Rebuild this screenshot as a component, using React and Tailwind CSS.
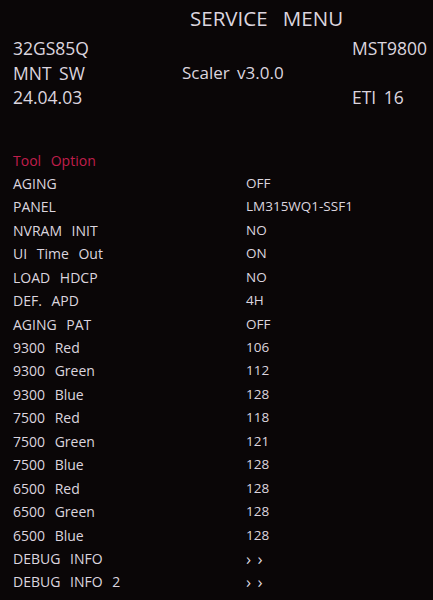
import React from "react";

const rows = [
  ["AGING", "OFF"],
  ["PANEL", "LM315WQ1-SSF1"],
  ["NVRAM INIT", "NO"],
  ["UI Time Out", "ON"],
  ["LOAD HDCP", "NO"],
  ["DEF. APD", "4H"],
  ["AGING PAT", "OFF"],
  ["9300 Red", "106"],
  ["9300 Green", "112"],
  ["9300 Blue", "128"],
  ["7500 Red", "118"],
  ["7500 Green", "121"],
  ["7500 Blue", "128"],
  ["6500 Red", "128"],
  ["6500 Green", "128"],
  ["6500 Blue", "128"],
  ["DEBUG INFO", "› ›"],
  ["DEBUG INFO 2", "› ›"],
];

export default function App() {
  return (
    <div
      className="w-[433px] h-[600px] overflow-hidden bg-[#0a0607] text-[#dcd5df] whitespace-pre"
      style={{ fontFamily: '"Open Sans", "Noto Sans", sans-serif' }}
    >
      {/* title */}
      <div className="pt-[5px] pl-[190px] text-[20.5px] leading-[26px] [word-spacing:10px]">
        SERVICE MENU
      </div>

      {/* model info */}
      <div className="mt-[5px] pl-[13px] text-[17.5px] leading-[24.5px] [word-spacing:3px]">
        <div className="flex">
          <span className="w-[339px]">32GS85Q</span>
          <span>MST9800</span>
        </div>
        <div className="flex">
          <span className="w-[169px]">MNT SW</span>
          <span className="text-[17px]">Scaler v3.0.0</span>
        </div>
        <div className="flex">
          <span className="w-[339px]">24.04.03</span>
          <span>ETI 16</span>
        </div>
      </div>

      {/* options list */}
      <div className="mt-[39px] pl-[13px] leading-[23.44px]">
        <div className="text-[14px] text-[#c01e4c] [word-spacing:6px]">Tool Option</div>
        {rows.map(([label, value]) => (
          <div key={label} className="flex">
            <span className="w-[233px] text-[14px] [word-spacing:6px]">{label}</span>
            {value.startsWith("›") ? (
              <span className="text-[17px] [word-spacing:2px]">{value}</span>
            ) : (
              <span className="text-[13.5px]">{value}</span>
            )}
          </div>
        ))}
      </div>
    </div>
  );
}
